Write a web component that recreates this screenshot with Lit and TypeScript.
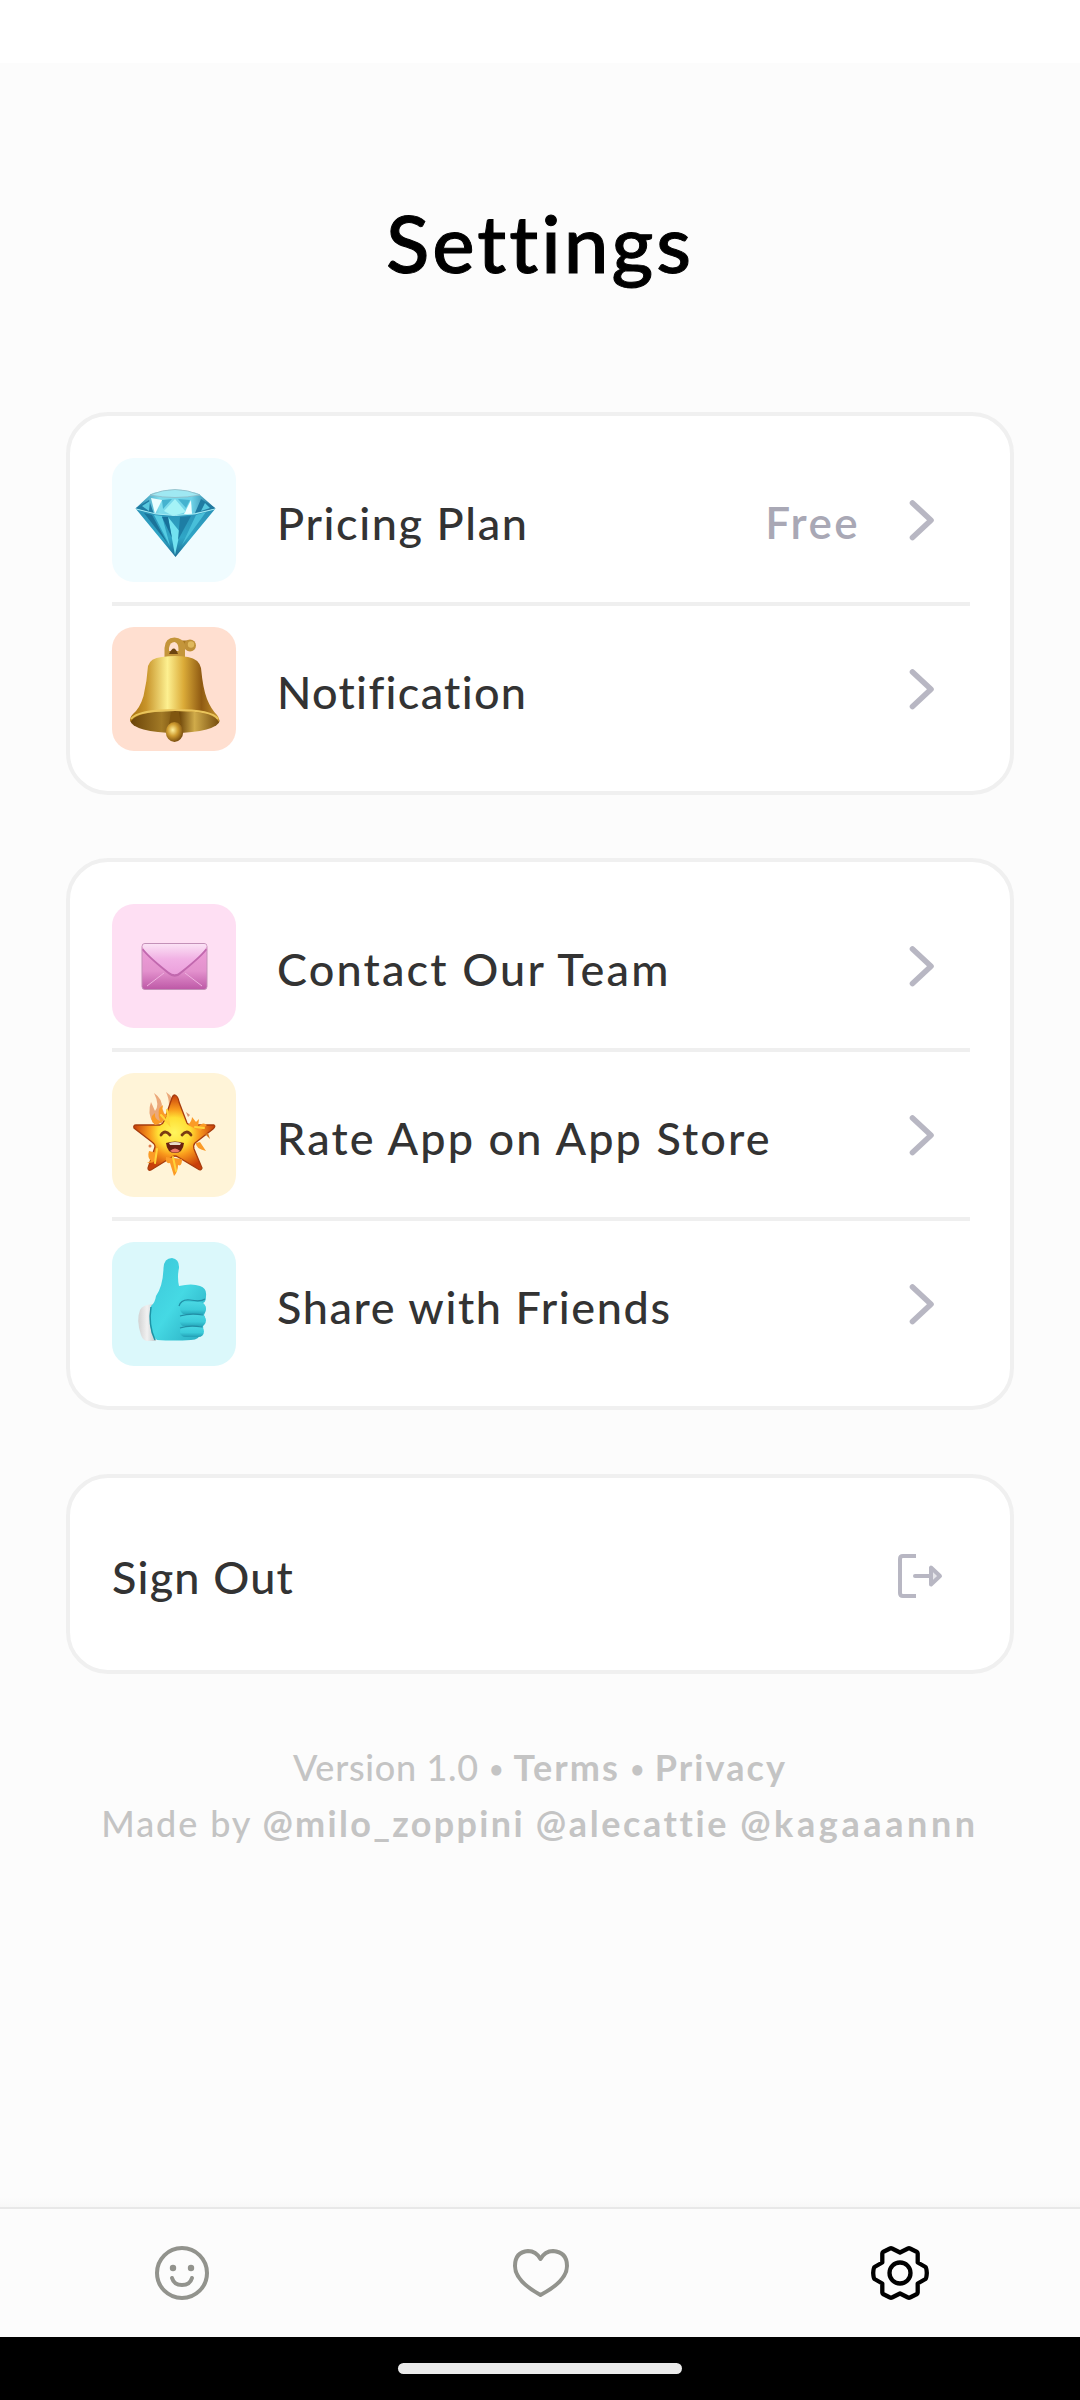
import { LitElement, html, css, svg, nothing, TemplateResult } from "lit";
import { customElement, property } from "lit/decorators.js";

const diamond = svg`
  <defs>
    <linearGradient id="dg" x1="0" y1="0" x2="0" y2="1">
      <stop offset="0" stop-color="#2b93b8"/><stop offset=".6" stop-color="#2fa5c6"/><stop offset="1" stop-color="#1b6f96"/>
    </linearGradient>
    <linearGradient id="dt" x1="0" y1="0" x2="1" y2="0">
      <stop offset="0" stop-color="#1f7fa6"/><stop offset=".3" stop-color="#7fdcec"/><stop offset=".7" stop-color="#6ed3e8"/><stop offset="1" stop-color="#17668e"/>
    </linearGradient>
  </defs>
  <path d="M23.5 50.5L39 36Q62 28 87 36L103.500 50.500Q63 64 23.500 50.500Z" fill="url(#dt)"/>
  <path d="M23.500 50.500Q63 64 103.500 50.500L63.500 99Z" fill="url(#dg)"/>
  <path d="M38 37Q63 26 88 37Q63 42 38 37Z" fill="#9fe8f2" stroke="#8fb9c4" stroke-width=".8"/>
  <path d="M39 40L50 42L43 56Z" fill="#e9feff"/>
  <path d="M79 42L72 56L80 56Z" fill="#f2ffff"/>
  <path d="M63 41L52 53L61 58L74 54Z" fill="#a5f3f7"/>
  <path d="M50 42L60 41L51 51ZM66 41L78 42L74 50Z" fill="#45b2cf"/>
  <path d="M24 50L37 42L42 56ZM103 50L89 41L83 55Z" fill="#1f7ba2"/>
  <path d="M30 48L38 43L37 53ZM93 45L98 50L89 53Z" fill="#58c8df"/>
  <path d="M42 57L58 88L50 58Z" fill="#55cbe2"/>
  <path d="M56 59L63 97L68 74Z" fill="#72e2f0"/>
  <path d="M68 59L66 82L79 58Z" fill="#1d7da4"/>
  <path d="M84 57L70 87L94 54Z" fill="#48bfd9"/>
  <path d="M50 59L60 80L56 59Z" fill="#17709a"/>
  <path d="M32 55L56 86L40 57Z" fill="#1a7399"/>
  <path d="M24 51Q63 64 103 51" fill="none" stroke="#a3ecf5" stroke-width="1"/>`;

const bell = svg`
  <defs>
    <linearGradient id="bg" x1="0" y1="0" x2="1" y2="0">
      <stop offset="0" stop-color="#a8700f"/><stop offset=".18" stop-color="#c8942a"/><stop offset=".42" stop-color="#fdf090"/>
      <stop offset=".6" stop-color="#dbab38"/><stop offset=".8" stop-color="#8f5a12"/><stop offset="1" stop-color="#c8962f"/>
    </linearGradient>
    <linearGradient id="bi" x1="0" y1="0" x2="1" y2="0">
      <stop offset="0" stop-color="#6a4308"/><stop offset=".35" stop-color="#a27a26"/><stop offset=".55" stop-color="#70480a"/><stop offset=".72" stop-color="#d0ab4a"/><stop offset="1" stop-color="#744b0d"/>
    </linearGradient>
    <radialGradient id="bc" cx=".4" cy=".4" r=".6"><stop offset="0" stop-color="#fff09a"/><stop offset=".5" stop-color="#cf9c30"/><stop offset="1" stop-color="#7d5110"/></radialGradient>
  </defs>
  <rect x="70" y="13.500" width="8" height="8" fill="#a77720"/>
  <circle cx="78" cy="18.500" r="6" fill="#bf9038"/><circle cx="79" cy="17.500" r="3.200" fill="#dfb85c"/>
  <path d="M52.500 31V21Q53 10.500 62.500 10.500Q71 11 73 18V31Z" fill="#c4953a"/>
  <path d="M57 24V21Q58 15 62.500 15Q67 16 66.500 24Z" fill="#ffdfd0"/>
  <path d="M57 27Q62 16 66 27Z" fill="#6c4410"/>
  <ellipse cx="63" cy="94" rx="44.500" ry="12" fill="url(#bi)"/>
  <path d="M36 39Q38 31 50 30Q63 28 76 30Q87 32 89 41Q91 62 95 72Q99 82 105 88Q108 92 107 95Q102 84 63 84Q24 84 18.500 95Q17 91 21 87Q28 81 31.500 69Q35 54 36 39Z" fill="url(#bg)"/>
  <path d="M19 92Q26 83 63 83Q100 83 106 92" fill="none" stroke="#e9c45b" stroke-width="2"/>
  <path d="M59 85H67L69 97H57Z" fill="#80560f"/>
  <ellipse cx="62.500" cy="105" rx="8.700" ry="10" fill="url(#bc)"/>`;

const envelope = svg`
  <defs>
    <linearGradient id="eb" x1="0" y1="0" x2="0" y2="1"><stop offset="0" stop-color="#ee9fd8"/><stop offset=".6" stop-color="#e391cd"/><stop offset="1" stop-color="#bd58a6"/></linearGradient>
    <linearGradient id="ef" x1="0" y1="0" x2="0" y2="1"><stop offset="0" stop-color="#fbe2f5"/><stop offset=".5" stop-color="#f1b1e4"/><stop offset="1" stop-color="#eba0dc"/></linearGradient>
  </defs>
  <rect x="30" y="39.500" width="65" height="46" rx="3" fill="url(#eb)" stroke="#c391b8" stroke-width="1"/>
  <path d="M35 82L52 69M90 82L73 69" stroke="#efb2df" stroke-width="1"/>
  <path d="M31 45Q36 52 57 69Q63 74 68 69Q89 52 94 45" fill="none" stroke="#c168ae" stroke-width="2.500"/>
  <path d="M30.500 43Q30.500 40 33 40H92Q95 40 94.500 43Q91 50 68 68Q63 72.500 57 68Q34 50 30.500 43Z" fill="url(#ef)"/>`;

const star = svg`
  <defs>
    <radialGradient id="sg" cx=".5" cy=".5" r=".5"><stop offset="0" stop-color="#fff55e"/><stop offset=".4" stop-color="#ffdf35"/><stop offset=".62" stop-color="#f99a1c"/><stop offset="1" stop-color="#c83f0a"/></radialGradient>
  </defs>
  <path d="M41 50Q35 40 39 29L43 38Q48 32 42 20Q51 26 50 36Q54 39 50 50ZM54 19Q62 24 64 36L57 33Q57 25 54 19Z" fill="#e89a68" opacity=".85"/>
  <path d="M63 22Q66 23 67 29L75 50Q76 52 80 52L102 52Q104 53 101 56L83 70Q81 72 82 76L90 95Q89 98 86 96L66 84Q63 82 60 84L39 97Q36 98 36 95L43 74Q43 71 40 69L22 55Q21 52 24 52L48 52Q51 51 52 48L60 25Q61 22 63 22Z" fill="url(#sg)" stroke="#a73c0d" stroke-width="1.300"/>
  <path d="M43 52Q36 45 43 40Q42 46 48 48Q44 36 51 32Q49 40 55 42Q52 50 43 52ZM76 52Q80 48 80 44L84 49L87 46L86 54Q91 48 95 52L88 58ZM84 70Q83 75 94 78L88 69ZM37 78Q35 84 39 88L35 90Q45 91 45 80ZM54 84Q53 91 58 90L62 103Q66 99 66 92Q70 94 70 86Z" fill="#fb9b26"/>
  <path d="M49 42L57 51L55 37M83 54L92 55M45 76L43 90M61 84L64 98" stroke="#ffd43a" stroke-width="2" fill="none" stroke-linecap="round"/>
  <circle cx="38" cy="73" r="1.500" fill="#df8050"/><path d="M74 39L78 42L76 44Z" fill="#d79370"/><path d="M96 60L98 66L93 61Z" fill="#d5781c"/>
  <path d="M49 62Q53 56 58 62M70 62Q75 56 79 62" fill="none" stroke="#7a3c12" stroke-width="2.800" stroke-linecap="round"/>
  <path d="M54 70Q63 67 72 70Q71 80 63 80Q55 80 54 70Z" fill="#6a2010"/>
  <path d="M57 70Q63 68 69 70L68 72H58Z" fill="#e9dcc8"/><path d="M58 78Q63 73 68 78Q63 81 58 78Z" fill="#ee7867"/>`;

const thumb = svg`
  <defs>
    <linearGradient id="tg" x1="0" y1="0" x2="1" y2="1"><stop offset="0" stop-color="#3cc6d8"/><stop offset=".5" stop-color="#45d9e4"/><stop offset="1" stop-color="#27a9be"/></linearGradient>
    <linearGradient id="tf" x1="0" y1="0" x2="0" y2="1"><stop offset="0" stop-color="#4ad7e3"/><stop offset=".6" stop-color="#3bcbd9"/><stop offset="1" stop-color="#239fb5"/></linearGradient>
    <linearGradient id="tc" x1="0" y1="0" x2="1" y2="0"><stop offset="0" stop-color="#d2d2d2"/><stop offset=".5" stop-color="#f1f1f1"/><stop offset="1" stop-color="#bfc9cc"/></linearGradient>
  </defs>
  <path d="M41 62Q30 63 28 68Q24 78 29 93Q31 99 36 99H44Z" fill="url(#tc)"/>
  <path d="M39 64Q43 61 44 54Q51 44 51.500 26Q52 16 60 16Q67.500 17 67 26Q65 35 67 44Q80 41 88 44Q95 46 94 54Q94 60 91 61Q96 66 92 73Q95 78 91 84Q92 89 88 91Q88 98 79 98Q62 99 45 98Q35 90 39 64Z" fill="url(#tg)"/>
  <rect x="68" y="60" width="26" height="13" rx="6.500" fill="url(#tf)"/><rect x="67.500" y="72" width="26.500" height="13" rx="6.500" fill="url(#tf)"/><rect x="68" y="84" width="24" height="11" rx="5.500" fill="url(#tf)"/>
  <path d="M67 64Q69 57 78 58Q89 60 93 57M68 74Q78 71 91 73M68 86Q77 83 90 85" fill="none" stroke="#218da4" stroke-width="1.200"/>
  <path d="M39 65Q36 83 43 98" fill="none" stroke="#1e93a5" stroke-width="1.500"/>`;

@customElement("settings-row")
class SettingsRow extends LitElement {
  @property() label = "";
  @property() value = "";
  @property() tone = "";
  @property() fit = "";
  @property({ attribute: false }) art: TemplateResult | typeof nothing = nothing;

  static styles = css`
    :host { display: block; }
    .row { display: flex; align-items: center; height: 124px; }
    .tile { width: 124px; height: 124px; border-radius: 22px; flex: none; }
    .tile svg { display: block; }
    .ice { background: #f0fcff; } .peach { background: #ffdfd0; } .pink { background: #fedff3; }
    .cream { background: #fff4d8; } .aqua { background: #dbf8fb; }
    .label { flex: 1; margin-left: 41px; padding-top: 6px; line-height: 56px; white-space: nowrap; font-size: 45px; font-weight: 500; color: #333; }
    .value { font-size: 44px; font-weight: 600; color: #a9a8b5; line-height: 56px; padding-top: 4px; margin-right: 46px; letter-spacing: 2.4px; }
    .chev { margin-right: 32px; display: block; flex: none; }
    .f0 { letter-spacing: 1.6px; } .f1 { letter-spacing: 1.3px; } .f2 { letter-spacing: 2.15px; } .f3 { letter-spacing: 2.1px; } .f4 { letter-spacing: 1.6px; }
  `;

  render() {
    return html`<div class="row">
      <div class="tile ${this.tone}"><svg width="124" height="124" viewBox="0 0 124 124">${this.art}</svg></div>
      <div class="label ${this.fit}">${this.label}</div>
      ${this.value ? html`<div class="value">${this.value}</div>` : nothing}
      <svg class="chev" width="32" height="44" viewBox="0 0 32 44"><path d="M6.500 5L25 22.200L6.500 39.500" fill="none" stroke="#b8b7c3" stroke-width="5.600" stroke-linecap="round" stroke-linejoin="round"/></svg>
    </div>`;
  }
}

@customElement("app-root")
class AppRoot extends LitElement {
  static styles = css`
    :host { display: block; font-family: Lato, "Open Sans", sans-serif; }
    .screen { display: flex; flex-direction: column; width: 1080px; height: 2400px; background: #fcfcfc; overflow: hidden; }
    .status { height: 63px; background: #fff; flex: none; }
    .title { margin: 0; padding-top: 129px; height: 220px; text-align: center; font-size: 80px; line-height: 100px; font-weight: 500; letter-spacing: 3px; color: #000; -webkit-text-stroke: 1px #000; flex: none; }
    .cards { display: flex; flex-direction: column; gap: 64px; padding: 0 66px; flex: none; }
    .card { box-sizing: border-box; background: #fff; border: 4px solid #f0f0f0; border-radius: 42px; padding: 42px 40px 40px 42px; }
    .card.first { height: 383px; margin-bottom: -1px; }
    .card.second { height: 552px; }
    .line { height: 4px; background: #efefef; margin: 20px 0 21px; }
    .signout { height: 200px; padding: 0 40px 0 42px; display: flex; align-items: center; justify-content: space-between; }
    .so { font-size: 45px; font-weight: 500; line-height: 56px; padding-top: 5px; color: #333; letter-spacing: 1.2px; }
    .exit { margin: 2px 24px 0 0; display: block; }
    .foot { padding-top: 65px; text-align: center; font-size: 36px; line-height: 56px; color: #c4c4c4; font-weight: 500; white-space: nowrap; }
    .foot b { font-weight: 700; }
    .foot div { height: 56px; }
    .dot { font-size: 26px; letter-spacing: 0; line-height: 1; vertical-align: 2px; }
    .v { letter-spacing: .7px; } .v b { letter-spacing: 2.1px; }
    .m { letter-spacing: 1.9px; }
    .h1 { letter-spacing: 2.3px; } .h2 { letter-spacing: 2.6px; } .h3 { letter-spacing: 3.6px; }
    .space { flex: 1; }
    .fade { height: 10px; background: linear-gradient(#fcfcfc, #f7f7f7); }
    .nav { height: 128px; border-top: 2px solid #e8e8e8; display: flex; justify-content: space-between; align-items: center; padding: 0 148px; flex: none; }
    .nav svg { display: block; width: 64px; height: 64px; overflow: visible; }
    .sys { height: 63px; background: #000; display: flex; justify-content: center; align-items: center; flex: none; }
    .handle { width: 284px; height: 11px; border-radius: 6px; background: #ebebeb; }
  `;

  render() {
    return html`<div class="screen">
      <div class="status"></div>
      <h1 class="title">Settings</h1>
      <div class="cards">
        <div class="card first">
          <settings-row label="Pricing Plan" value="Free" tone="ice" fit="f0" .art=${diamond}></settings-row>
          <div class="line"></div>
          <settings-row label="Notification" tone="peach" fit="f1" .art=${bell}></settings-row>
        </div>
        <div class="card second">
          <settings-row label="Contact Our Team" tone="pink" fit="f2" .art=${envelope}></settings-row>
          <div class="line"></div>
          <settings-row label="Rate App on App Store" tone="cream" fit="f3" .art=${star}></settings-row>
          <div class="line"></div>
          <settings-row label="Share with Friends" tone="aqua" fit="f4" .art=${thumb}></settings-row>
        </div>
        <div class="card signout">
          <span class="so">Sign Out</span>
          <svg class="exit" width="52" height="52" viewBox="894 1549 52 52" fill="none" stroke="#b8b7c3" stroke-width="4">
            <path d="M916 1556H903Q900 1556 900 1559V1593Q900 1596 903 1596H916" stroke-linejoin="round"/>
            <path d="M915 1576H931" stroke-linecap="round"/>
            <path d="M931 1567.500V1584.500L940 1576Z" fill="#e6e6ea" stroke-linejoin="round"/>
          </svg>
        </div>
      </div>
      <div class="foot">
        <div class="v">Version 1.0 <span class="dot">•</span> <b>Terms</b> <span class="dot">•</span> <b>Privacy</b></div>
        <div class="m">Made by <b class="h1">@milo_zoppini</b> <b class="h2">@alecattie</b> <b class="h3">@kagaaannn</b></div>
      </div>
      <div class="space"></div>
      <div class="fade"></div>
      <div class="nav">
        <svg viewBox="148 2241 64 64" fill="none" stroke="#92938d" stroke-width="4"><circle cx="182" cy="2273" r="25"/><circle cx="173" cy="2268" r="3.200" fill="#92938d" stroke="none"/><circle cx="191" cy="2268" r="3.200" fill="#92938d" stroke="none"/><path d="M172 2278Q174 2285 182 2285Q190 2285 192 2278" stroke-linecap="round"/></svg>
        <svg viewBox="508 2241 64 64" fill="none" stroke="#92938d" stroke-width="4" stroke-linejoin="round"><path d="M540.500 2259Q536 2251 528 2251Q515 2252 515 2266Q515 2281 540.500 2295Q567 2281 567 2266Q567 2252 553 2251Q545 2251 540.500 2259Z"/></svg>
        <svg viewBox="868 2241 64 64" fill="none" stroke="#000" stroke-width="4.300" stroke-linejoin="round"><circle cx="900" cy="2273" r="10.500"/><path d="M892 2248.500L900 2252.500L908 2248.500Q909 2248 910 2248.500L917 2252Q917.700 2252.500 917.700 2253.500V2262.500L925.500 2267Q926.500 2268 926.800 2273Q926.500 2278 925.500 2279L917.700 2283.500V2292.500Q917.700 2293.500 917 2294L910 2297.500Q909 2298 908 2297.500L900 2293.500L892 2297.500Q891 2298 890 2297.500L883 2294Q882.300 2293.500 882.300 2292.500V2283.500L874.500 2279Q873.500 2278 873.200 2273Q873.500 2268 874.500 2267L882.300 2262.500V2253.500Q882.300 2252.500 883 2252L890 2248.500Q891 2248 892 2248.500Z"/></svg>
      </div>
      <div class="sys"><div class="handle"></div></div>
    </div>`;
  }
}
